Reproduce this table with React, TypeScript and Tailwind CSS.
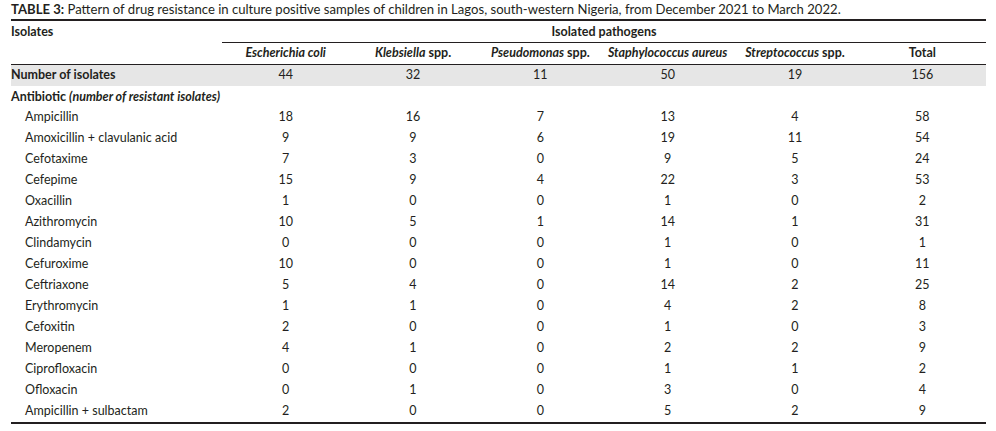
import React from 'react';

type Row = { name: string; values: number[] };

const rows: Row[] = [
  { name: 'Ampicillin', values: [18, 16, 7, 13, 4, 58] },
  { name: 'Amoxicillin + clavulanic acid', values: [9, 9, 6, 19, 11, 54] },
  { name: 'Cefotaxime', values: [7, 3, 0, 9, 5, 24] },
  { name: 'Cefepime', values: [15, 9, 4, 22, 3, 53] },
  { name: 'Oxacillin', values: [1, 0, 0, 1, 0, 2] },
  { name: 'Azithromycin', values: [10, 5, 1, 14, 1, 31] },
  { name: 'Clindamycin', values: [0, 0, 0, 1, 0, 1] },
  { name: 'Cefuroxime', values: [10, 0, 0, 1, 0, 11] },
  { name: 'Ceftriaxone', values: [5, 4, 0, 14, 2, 25] },
  { name: 'Erythromycin', values: [1, 1, 0, 4, 2, 8] },
  { name: 'Cefoxitin', values: [2, 0, 0, 1, 0, 3] },
  { name: 'Meropenem', values: [4, 1, 0, 2, 2, 9] },
  { name: 'Ciprofloxacin', values: [0, 0, 0, 1, 1, 2] },
  { name: 'Ofloxacin', values: [0, 1, 0, 3, 0, 4] },
  { name: 'Ampicillin + sulbactam', values: [2, 0, 0, 5, 2, 9] },
];

const grid = 'grid grid-cols-[211px_repeat(6,minmax(0,1fr))] items-center';

const App: React.FC = () => {
  return (
    <div className="w-[996px] h-[431px] bg-white text-[#231f20] font-['Lato','Open_Sans',sans-serif] text-[12.5px] leading-none">
      <div className="ml-[11px] w-[975px]">
        {/* Caption */}
        <div className="h-[19px] flex items-center text-[13.1px] whitespace-nowrap pt-[1px]">
          <span className="font-bold">TABLE 3:</span>
          <span>&nbsp;Pattern of drug resistance in culture positive samples of children in Lagos, south-western Nigeria, from December 2021 to March 2022.</span>
        </div>
        <div className="h-[2px] bg-[#231f20]" />

        {/* Header */}
        <div className={`${grid} h-[21px] font-bold pt-[1px]`}>
          <div>Isolates</div>
          <div className="col-span-6 text-center">Isolated pathogens</div>
        </div>
        <div className={grid}>
          <div />
          <div className="col-span-6 h-[1px] bg-[#231f20]" />
        </div>
        <div className={`${grid} h-[21px] font-bold text-center`}>
          <div />
          <div className="italic">Escherichia coli</div>
          <div><span className="italic">Klebsiella</span> spp.</div>
          <div><span className="italic">Pseudomonas</span> spp.</div>
          <div className="italic">Staphylococcus aureus</div>
          <div><span className="italic">Streptococcus</span> spp.</div>
          <div>Total</div>
        </div>
        <div className="h-[1px] bg-[#231f20]" />

        {/* Number of isolates */}
        <div className={`${grid} h-[21px] bg-[#e6e6e6] text-center`}>
          <div className="text-left font-bold">Number of isolates</div>
          {[44, 32, 11, 50, 19, 156].map((n, i) => (
            <div key={i}>{n}</div>
          ))}
        </div>

        <div className="h-[21px] flex items-center font-bold pt-[1px]">
          Antibiotic&nbsp;<span className="italic">(number of resistant isolates)</span>
        </div>

        {/* Antibiotic rows */}
        {rows.map((r) => (
          <div key={r.name} className={`${grid} h-[21px] text-center`}>
            <div className="text-left pl-[14px]">{r.name}</div>
            {r.values.map((v, i) => (
              <div key={i}>{v}</div>
            ))}
          </div>
        ))}
        <div className="h-[2px] bg-[#231f20]" />
      </div>
    </div>
  );
};

export default App;
